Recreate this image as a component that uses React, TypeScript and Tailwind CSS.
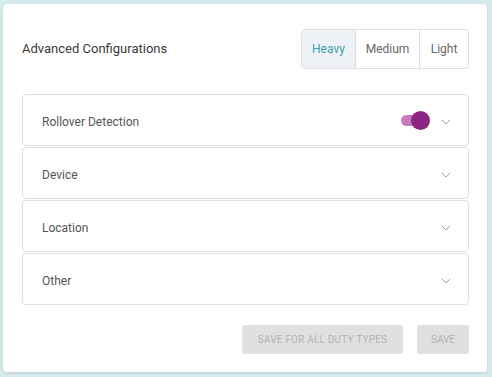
import { ChevronDown } from 'lucide-react';

const sections = ['Rollover Detection', 'Device', 'Location', 'Other'];
const dutyTypes = ['Heavy', 'Medium', 'Light'];

export default function App() {
  return (
    <div className="w-[492px] h-[377px] bg-[#d5eaeb] pt-[4px] pl-[3px] font-['Roboto',sans-serif]">
      <div className="w-[484px] h-[368px] bg-white rounded-[4px] shadow-[0_1px_3px_rgba(0,0,0,0.12)] pl-[19px] pr-[18px] pt-[25px]">
        {/* Header */}
        <div className="flex items-center justify-between">
          <h1 className="text-[13px] text-[#3a3a3a]">Advanced Configurations</h1>
          <div className="flex h-[40px] border border-[#dedede] rounded-[4px] overflow-hidden text-[12px]">
            {dutyTypes.map((d, i) => (
              <div
                key={d}
                className={`flex items-center justify-center ${i > 0 ? 'border-l border-[#dedede]' : ''} ${
                  d === 'Heavy' ? 'w-[53px] bg-[#eef2f7] text-[#3ba0aa]' : d === 'Medium' ? 'w-[64px] text-[#666]' : 'w-[49px] text-[#666]'
                }`}
              >
                {d}
              </div>
            ))}
          </div>
        </div>

        {/* Sections */}
        <div className="mt-[25px] flex flex-col gap-[1px]">
          {sections.map((s) => (
            <div key={s} className="h-[52px] border border-[#dedede] rounded-[4px] flex items-center pl-[19px] pr-[14px]">
              <span className="text-[12px] text-[#555] flex-1 pt-[3px]">{s}</span>
              {s === 'Rollover Detection' && (
                <div className="relative w-[27px] h-[11px] rounded-full bg-[#c27cba] mr-[10px]">
                  <div className="absolute right-[-2px] top-[-4px] w-[19px] h-[19px] rounded-full bg-[#8d2384]" />
                </div>
              )}
              <ChevronDown size={16} strokeWidth={1.4} className="text-[#999] mt-[4px]" />
            </div>
          ))}
        </div>

        {/* Actions */}
        <div className="mt-[20px] flex justify-end gap-[14px]">
          <button className="h-[29px] w-[161px] rounded-[3px] bg-[#e0e0e0] text-[#b3b3b3] text-[10px] tracking-[0.2px]">
            SAVE FOR ALL DUTY TYPES
          </button>
          <button className="h-[29px] w-[52px] rounded-[3px] bg-[#e0e0e0] text-[#b3b3b3] text-[10px]">SAVE</button>
        </div>
      </div>
    </div>
  );
}
